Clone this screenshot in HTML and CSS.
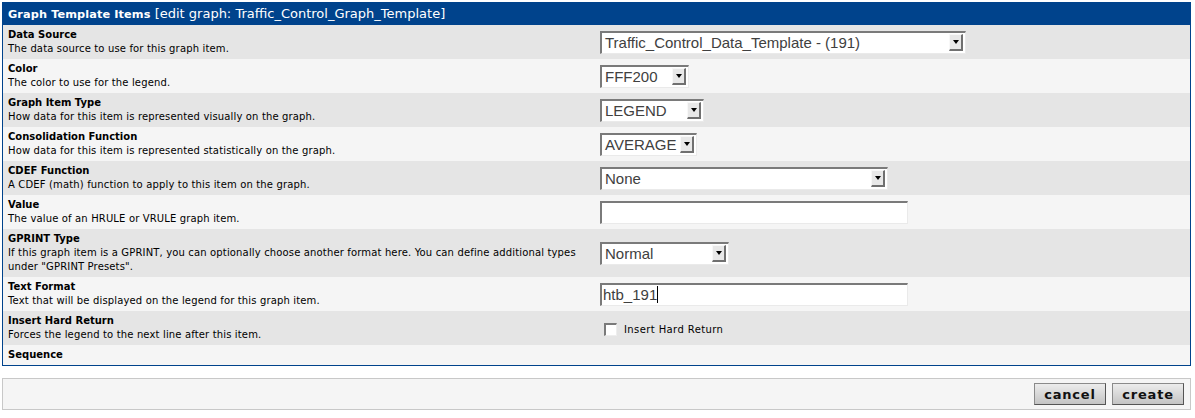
FILE: index.html
```html
<!DOCTYPE html>
<html>
<head>
<meta charset="utf-8">
<link rel="stylesheet" href="styles.css">
</head>
<body>
<div class="panel">
  <div class="panel-head"><b>Graph Template Items</b> <span class="sub">[edit graph: Traffic_Control_Graph_Template]</span></div>
  <div class="row dark">
    <div class="lbl"><div class="t">Data Source</div><div class="d">The data source to use for this graph item.</div></div>
    <div class="ctl"><div class="sel w-ds"><span class="v">Traffic_Control_Data_Template - (191)</span><span class="btn"><i></i></span></div></div>
  </div>
  <div class="row light">
    <div class="lbl"><div class="t">Color</div><div class="d">The color to use for the legend.</div></div>
    <div class="ctl"><div class="sel w-color"><span class="v">FFF200</span><span class="btn"><i></i></span></div></div>
  </div>
  <div class="row dark">
    <div class="lbl"><div class="t">Graph Item Type</div><div class="d">How data for this item is represented visually on the graph.</div></div>
    <div class="ctl"><div class="sel w-type"><span class="v">LEGEND</span><span class="btn"><i></i></span></div></div>
  </div>
  <div class="row light">
    <div class="lbl"><div class="t">Consolidation Function</div><div class="d">How data for this item is represented statistically on the graph.</div></div>
    <div class="ctl"><div class="sel w-cf"><span class="v">AVERAGE</span><span class="btn"><i></i></span></div></div>
  </div>
  <div class="row dark">
    <div class="lbl"><div class="t">CDEF Function</div><div class="d">A CDEF (math) function to apply to this item on the graph.</div></div>
    <div class="ctl"><div class="sel w-cdef"><span class="v">None</span><span class="btn"><i></i></span></div></div>
  </div>
  <div class="row light">
    <div class="lbl"><div class="t">Value</div><div class="d">The value of an HRULE or VRULE graph item.</div></div>
    <div class="ctl"><div class="inp"></div></div>
  </div>
  <div class="row dark">
    <div class="lbl"><div class="t">GPRINT Type</div><div class="d">If this graph item is a GPRINT, you can optionally choose another format here. You can define additional types under "GPRINT Presets".</div></div>
    <div class="ctl"><div class="sel w-gp"><span class="v">Normal</span><span class="btn"><i></i></span></div></div>
  </div>
  <div class="row light">
    <div class="lbl"><div class="t">Text Format</div><div class="d">Text that will be displayed on the legend for this graph item.</div></div>
    <div class="ctl"><div class="inp"><span class="v">htb_191</span><span class="caret"></span></div></div>
  </div>
  <div class="row dark">
    <div class="lbl"><div class="t">Insert Hard Return</div><div class="d">Forces the legend to the next line after this item.</div></div>
    <div class="ctl"><label class="chk"><span class="box"></span>Insert Hard Return</label></div>
  </div>
  <div class="row light seq">
    <div class="lbl"><div class="t">Sequence</div></div>
  </div>
</div>
<div class="actions">
  <span class="button">cancel</span>
  <span class="button">create</span>
</div>
</body>
</html>
```
FILE: styles.css
```css
body {
  margin: 2px 4px 0 2px;
  font-family: "DejaVu Sans", Verdana, sans-serif;
  font-size: 10px;
  letter-spacing: 0.15px;
  color: #000;
  background: #fff;
}
.panel {
  border: 1px solid #00438c;
}
.panel-head {
  box-sizing: border-box;
  height: 22px;
  background: #00438c;
  color: #fff;
  font-size: 13px;
  line-height: 16px;
  padding: 3px 5px 3px 5px;
  letter-spacing: 0;
  white-space: nowrap;
}
.panel-head b, .panel-head .sub {
  line-height: 10px;
}
.panel-head b {
  font-size: 11.3px;
  letter-spacing: 0.1px;
}
.row {
  display: flex;
  align-items: center;
  min-height: 28px;
  padding: 3px 0 3px 5px;
}
.row.dark { background: #e5e5e5; }
.row.light { background: #f5f5f5; }
.row.seq { min-height: 13px; }
.lbl {
  width: 592px;
  line-height: 14px;
}
.t { font-weight: bold; letter-spacing: 0; }
.ctl {
  flex: 1;
  display: flex;
  align-items: center;
}
.sel, .inp {
  box-sizing: border-box;
  height: 23px;
  background: #fff;
  border-top: 2px solid #7a7a7a;
  border-left: 2px solid #7a7a7a;
  border-right: 1px solid #eaeaea;
  border-bottom: 1px solid #eaeaea;
  display: flex;
  align-items: center;
  font-family: "Liberation Sans", Arial, sans-serif;
  font-size: 15px;
  letter-spacing: 0;
  color: #404040;
}
.sel .v, .inp .v { flex: 1; padding-left: 3px; white-space: nowrap; }
.inp { width: 308px; }
.inp .v { flex: none; padding-left: 1px; }
.caret { width: 1px; height: 17px; background: #000; }
.btn {
  box-sizing: border-box;
  width: 14px;
  height: 17px;
  margin-right: 2px;
  background: #e8e8e8;
  border-top: 1px solid #f8f8f8;
  border-left: 1px solid #f8f8f8;
  border-right: 2px solid #707070;
  border-bottom: 2px solid #707070;
  display: flex;
  align-items: center;
  justify-content: center;
}
.btn i {
  width: 0; height: 0;
  border-left: 3px solid transparent;
  border-right: 3px solid transparent;
  border-top: 4px solid #000;
}
.w-ds { width: 366px; }
.w-color { width: 89px; }
.w-type { width: 104px; }
.w-cf { width: 97px; }
.w-cdef { width: 288px; }
.w-gp { width: 129px; }
.chk {
  display: flex;
  align-items: center;
  padding-left: 4px;
  padding-top: 2px;
  font-size: 10px;
  letter-spacing: 0.4px;
}
.box {
  box-sizing: border-box;
  width: 13px;
  height: 13px;
  background: #fff;
  border-top: 2px solid #7a7a7a;
  border-left: 2px solid #7a7a7a;
  border-right: 1px solid #eee;
  border-bottom: 1px solid #eee;
  margin-right: 7px;
}
.actions {
  margin-top: 12px;
  border: 1px solid #c8c8c8;
  background: #f5f5f5;
  height: 30px;
  display: flex;
  align-items: center;
  justify-content: flex-end;
  gap: 6px;
  padding-right: 6px;
}
.button {
  box-sizing: border-box;
  width: 72px;
  height: 22px;
  display: flex;
  align-items: center;
  justify-content: center;
  font-weight: bold;
  font-size: 13px;
  letter-spacing: 0.8px;
  color: #111;
  background: linear-gradient(#ececec, #c4c4c4);
  border: 1px solid #8a8a8a;
  border-right-color: #555;
  border-bottom-color: #555;
}
```
